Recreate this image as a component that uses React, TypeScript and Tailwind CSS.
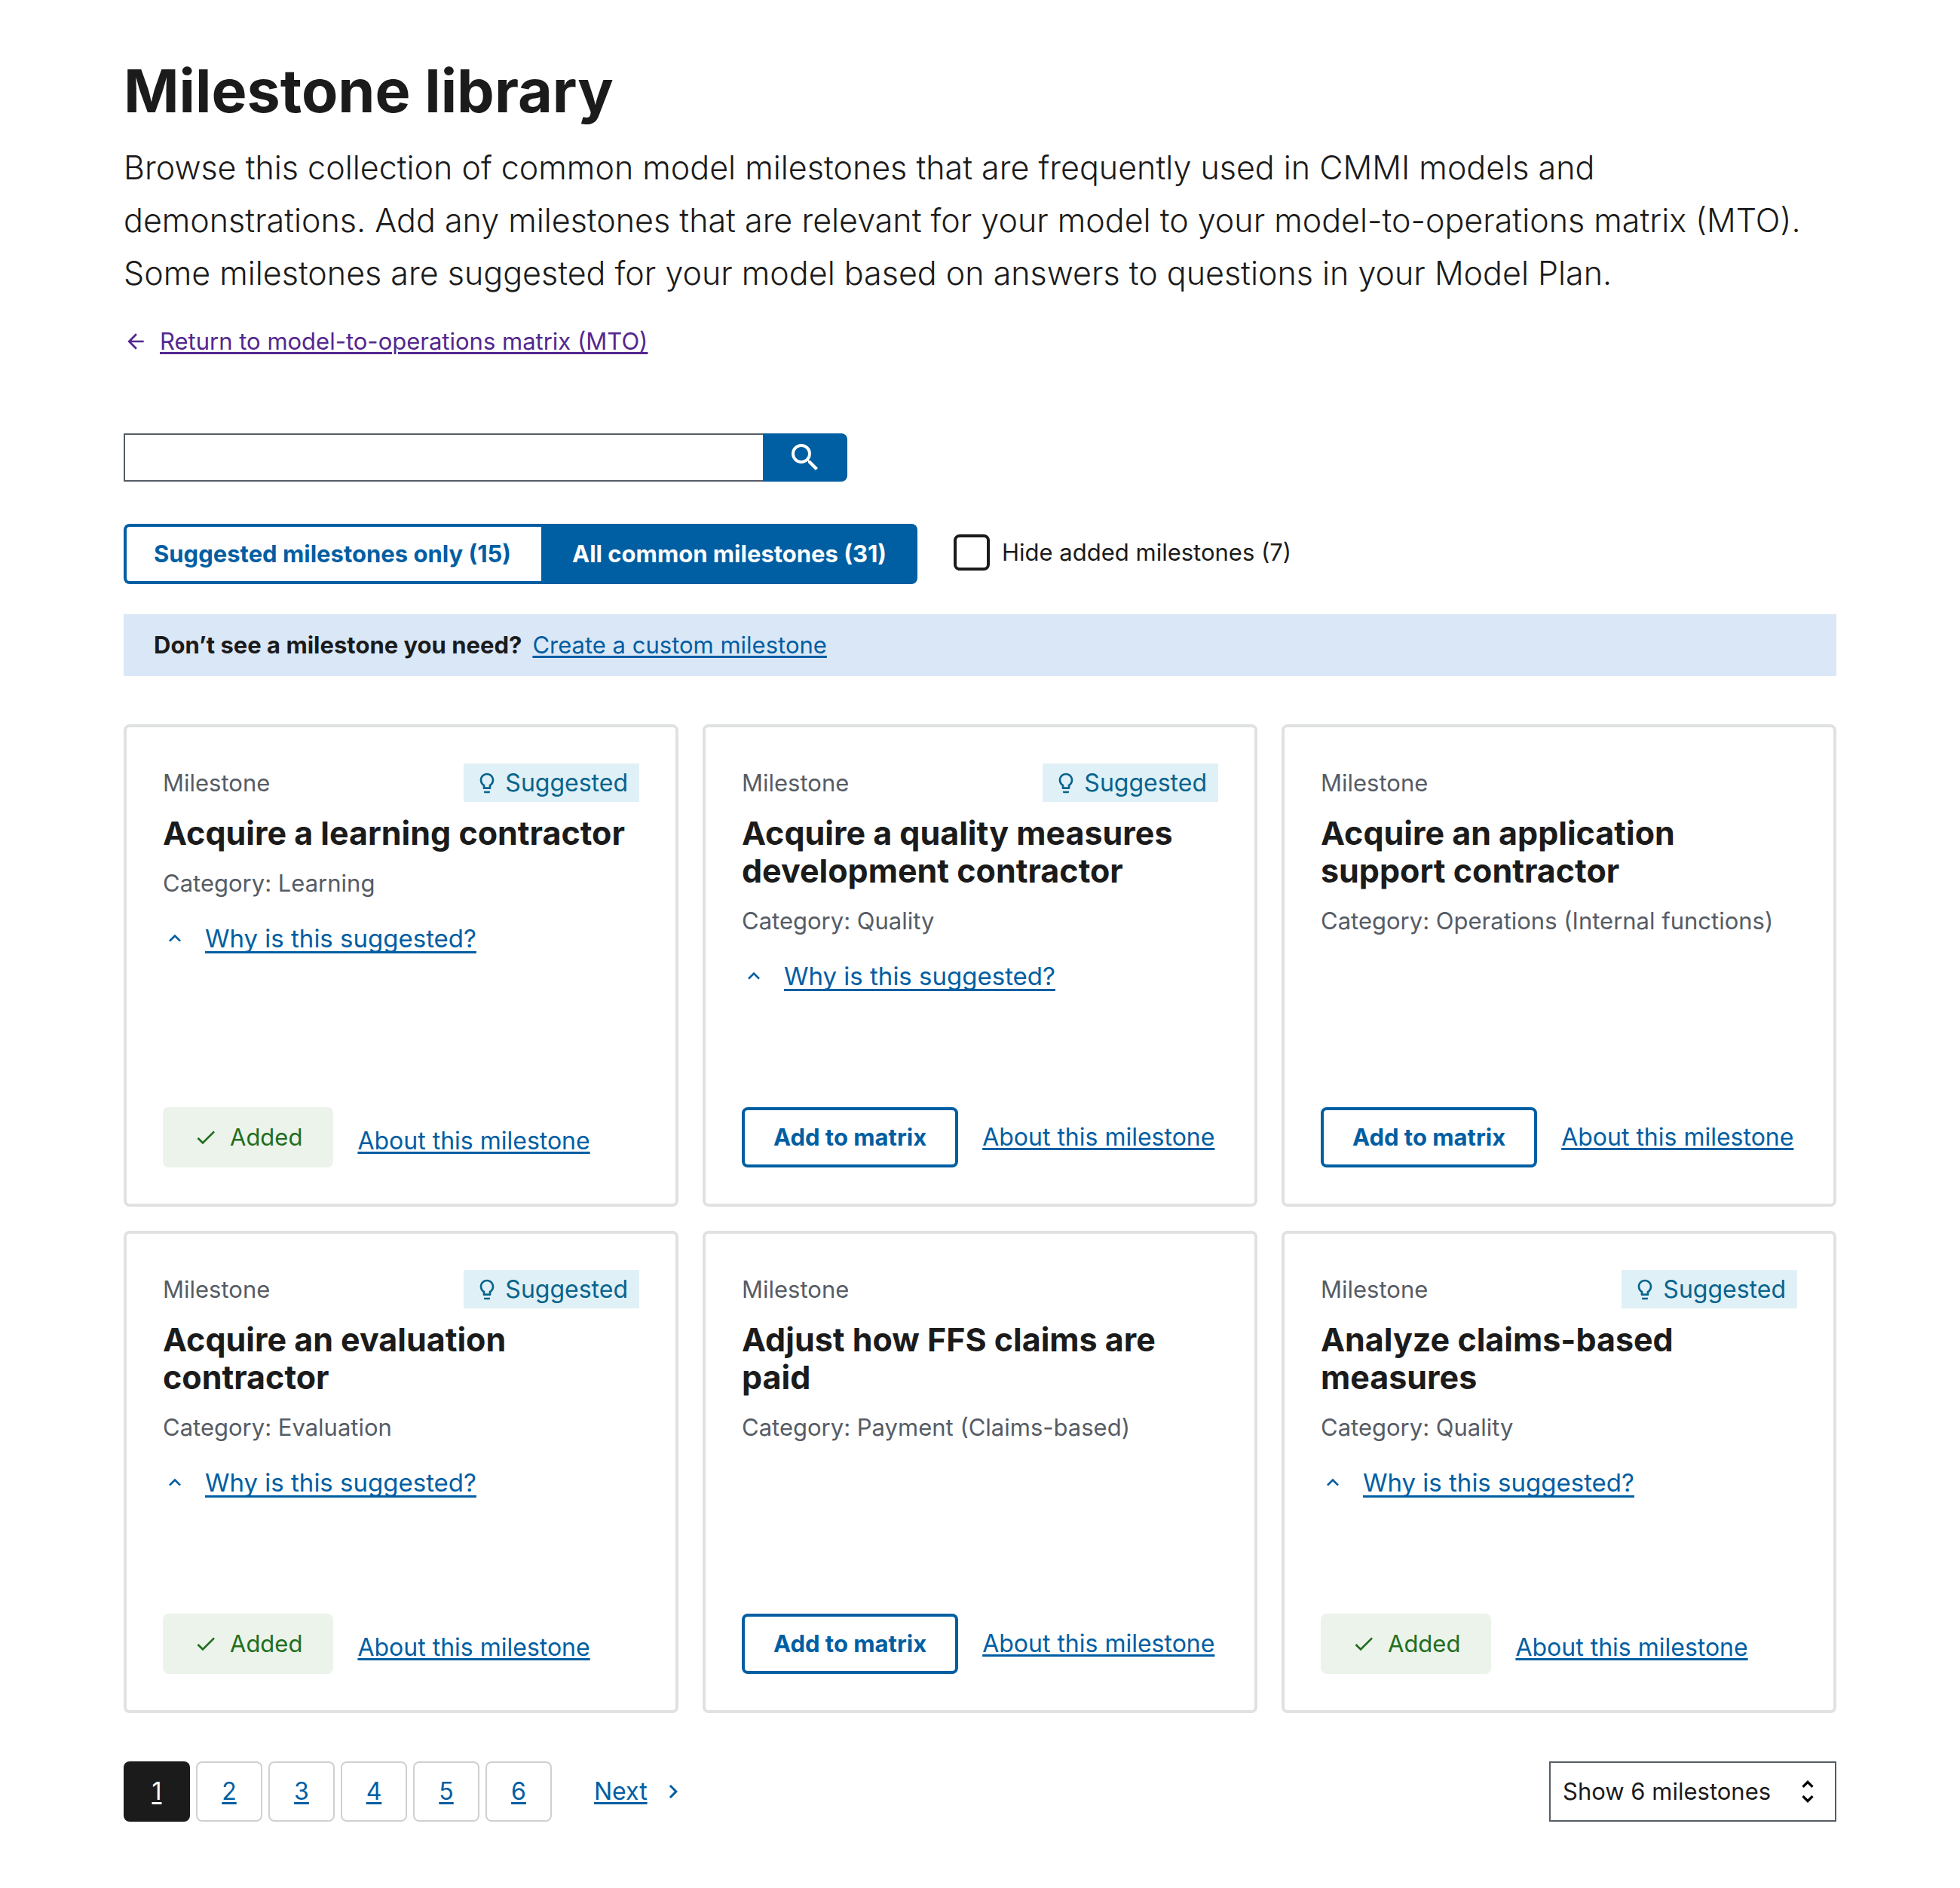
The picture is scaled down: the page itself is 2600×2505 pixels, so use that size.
import type { ReactNode } from "react";

type Milestone = {
  title: string;
  category: string;
  suggested: boolean;
  added: boolean;
};

const milestones: Milestone[] = [
  { title: "Acquire a learning contractor", category: "Learning", suggested: true, added: true },
  { title: "Acquire a quality measures development contractor", category: "Quality", suggested: true, added: false },
  { title: "Acquire an application support contractor", category: "Operations (Internal functions)", suggested: false, added: false },
  { title: "Acquire an evaluation contractor", category: "Evaluation", suggested: true, added: true },
  { title: "Adjust how FFS claims are paid", category: "Payment (Claims-based)", suggested: false, added: false },
  { title: "Analyze claims-based measures", category: "Quality", suggested: true, added: true },
];

const pages = [1, 2, 3, 4, 5, 6];

const icons = {
  arrowBack: "M20 11H7.83l5.59-5.59L12 4l-8 8 8 8 1.41-1.41L7.83 13H20v-2z",
  search:
    "M15.5 14h-.79l-.28-.27A6.471 6.471 0 0 0 16 9.5 6.5 6.5 0 1 0 9.5 16c1.61 0 3.09-.59 4.23-1.57l.27.28v.79l5 4.99L20.49 19l-4.99-5zm-6 0C7.01 14 5 11.99 5 9.5S7.01 5 9.5 5 14 7.01 14 9.5 11.99 14 9.5 14z",
  lightbulb:
    "M9 21c0 .55.45 1 1 1h4c.55 0 1-.45 1-1v-1H9v1zm3-19C8.14 2 5 5.14 5 9c0 2.38 1.19 4.47 3 5.74V17c0 .55.45 1 1 1h6c.55 0 1-.45 1-1v-2.26c1.81-1.27 3-3.36 3-5.74 0-3.86-3.14-7-7-7zm2.85 11.1-.85.6V16h-4v-2.3l-.85-.6C7.8 12.16 7 10.63 7 9c0-2.76 2.24-5 5-5s5 2.24 5 5c0 1.63-.8 3.16-2.15 4.1z",
  expandLess: "m12 8-6 6 1.41 1.41L12 10.83l4.59 4.58L18 14z",
  check: "M9 16.17 4.83 12l-1.42 1.41L9 19 21 7l-1.41-1.41z",
  navigateNext: "M10 6 8.59 7.41 13.17 12l-4.58 4.59L10 18l6-6z",
  unfoldMore:
    "M12 5.83 15.17 9l1.41-1.41L12 3 7.41 7.59 8.83 9 12 5.83zm0 12.34L8.83 15l-1.41 1.41L12 21l4.59-4.59L15.17 15 12 18.17z",
};

function Icon({ name, className }: { name: keyof typeof icons; className: string }) {
  return (
    <svg viewBox="0 0 24 24" fill="currentColor" aria-hidden="true" className={className}>
      <path d={icons[name]} />
    </svg>
  );
}

function TextLink({ children }: { children: ReactNode }) {
  return (
    <a href="#" className="text-[#005ea2] underline decoration-[3px] underline-offset-[3px]">
      {children}
    </a>
  );
}

function MilestoneCard({ title, category, suggested, added }: Milestone) {
  return (
    <li className="flex min-h-[640px] flex-col rounded-lg border-4 border-[#dfe1e2] p-12">
      <div className="flex h-[51px] items-center justify-between">
        <span className="text-[#565c65]">Milestone</span>
        {suggested && (
          <span className="flex h-full items-center gap-2 bg-[#e0f0f7] px-[15px] text-[32px] text-[#07648d]">
            <Icon name="lightbulb" className="size-8" />
            Suggested
          </span>
        )}
      </div>
      <h3 className="mt-4 text-[43px] leading-[50px] font-bold">{title}</h3>
      <p className="mt-[17px] leading-[50px] text-[#565c65]">Category: {category}</p>
      {suggested && (
        <button type="button" className="mt-6 flex items-center gap-6 self-start text-[33px] leading-[48px] text-[#005ea2]">
          <Icon name="expandLess" className="size-8" />
          <span className="underline decoration-[3px] underline-offset-[5px] [text-decoration-skip-ink:none]">
            Why is this suggested?
          </span>
        </button>
      )}
      {added ? (
        <div className="mt-auto flex items-center gap-8">
          <span className="flex h-20 items-center gap-4 rounded-lg bg-[#ebf3ea] px-[41px] text-[#216e1f]">
            <Icon name="check" className="size-8" />
            Added
          </span>
          <span className="pt-2.5 text-[32px]">
            <TextLink>About this milestone</TextLink>
          </span>
        </div>
      ) : (
        <div className="mt-auto flex items-center gap-8">
          <button type="button" className="h-20 rounded-lg border-4 border-[#005ea2] px-[38px] font-bold text-[#005ea2]">
            Add to matrix
          </button>
          <span className="text-[32px]">
            <TextLink>About this milestone</TextLink>
          </span>
        </div>
      )}
    </li>
  );
}

export default function App() {
  return (
    <main className="bg-white px-[164px] pt-18 pb-22 font-['Inter',sans-serif] text-[31px] leading-[42px] text-[#1b1b1b]">
      <h1 className="text-[79px] leading-[96px] font-bold">Milestone library</h1>
      <p className="mt-[19px] max-w-[2264px] text-[43px] leading-[70px] font-[350]">
        Browse this collection of common model milestones that are frequently used in CMMI models and demonstrations. Add
        any milestones that are relevant for your model to your model-to-operations matrix (MTO). Some milestones are
        suggested for your model based on answers to questions in your Model Plan.
      </p>

      <div className="mt-9 flex items-center gap-4 leading-10 text-[#54278f]">
        <Icon name="arrowBack" className="size-8" />
        <a href="#" className="underline decoration-[3px] underline-offset-[3px]">
          Return to model-to-operations matrix (MTO)
        </a>
      </div>

      <form role="search" className="mt-[102px] flex h-16 max-w-[960px]" onSubmit={(e) => e.preventDefault()}>
        <input
          type="search"
          aria-label="Search milestones"
          className="min-w-0 flex-1 appearance-none border-2 border-r-0 border-[#565c65] px-4 outline-none"
        />
        <button
          type="submit"
          aria-label="Search"
          className="flex w-28 items-center justify-center rounded-r-lg bg-[#005ea2] text-white"
        >
          <Icon name="search" className="size-12" />
        </button>
      </form>

      <div className="mt-14 flex gap-12">
        <div className="flex h-20 font-bold">
          <button type="button" className="rounded-l-lg border-4 border-r-0 border-[#005ea2] pr-10 pl-9 text-[#005ea2]">
            Suggested milestones only (15)
          </button>
          <button type="button" className="rounded-r-lg bg-[#005ea2] px-[41px] text-white">
            All common milestones (31)
          </button>
        </div>
        <label className="flex h-19 items-center gap-4">
          <input type="checkbox" className="size-12 appearance-none rounded-lg border-4 border-[#1b1b1b] bg-white" />
          Hide added milestones (7)
        </label>
      </div>

      <div className="mt-10 flex gap-3.5 bg-[#dae7f6] px-10 py-5">
        <strong className="font-bold">Don’t see a milestone you need?</strong>
        <TextLink>Create a custom milestone</TextLink>
      </div>

      <ul className="mt-16 grid grid-cols-3 gap-8">
        {milestones.map((m) => (
          <MilestoneCard key={m.title} {...m} />
        ))}
      </ul>

      <div className="mt-16 flex items-center justify-between">
        <nav aria-label="Pagination" className="flex items-center text-[32px]">
          <ul className="flex gap-2">
            {pages.map((page) => (
              <li key={page}>
                <a
                  href="#"
                  aria-current={page === 1 ? "page" : undefined}
                  className={
                    page === 1
                      ? "flex h-20 w-22 items-center justify-center rounded-lg bg-[#1b1b1b] text-white underline decoration-[3px] underline-offset-[3px]"
                      : "flex h-20 w-22 items-center justify-center rounded-lg border-2 border-[#d0d0d0] text-[#005ea2] underline decoration-[3px] underline-offset-[3px]"
                  }
                >
                  {page}
                </a>
              </li>
            ))}
          </ul>
          <a href="#" className="ml-14 flex items-center gap-4 text-[#005ea2]">
            <span className="underline decoration-[3px] underline-offset-[3px]">Next</span>
            <Icon name="navigateNext" className="size-9" />
          </a>
        </nav>

        <div className="relative w-[381px]">
          <select
            aria-label="Milestones per page"
            className="h-20 w-full appearance-none border-2 border-[#565c65] bg-white pr-16 pl-4 outline-none"
          >
            <option>Show 6 milestones</option>
            <option>Show 9 milestones</option>
            <option>Show all milestones</option>
          </select>
          <Icon name="unfoldMore" className="pointer-events-none absolute top-5 right-[18px] size-10 text-black" />
        </div>
      </div>
    </main>
  );
}
